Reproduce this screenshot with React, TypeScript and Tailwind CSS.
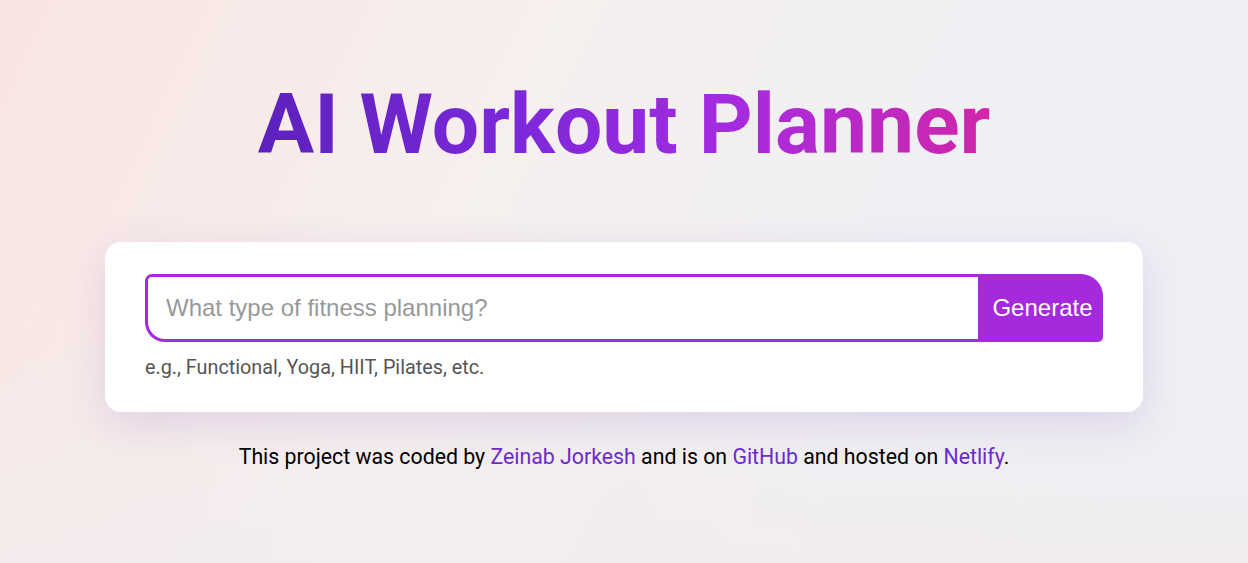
import React from 'react';

const App: React.FC = () => {
  return (
    <div className="min-h-screen w-full bg-[linear-gradient(115deg,#f9e5e2_0%,#f6efee_35%,#eff0f4_70%,#eef0f5_100%)] font-['Roboto',sans-serif]">
      <div className="min-h-screen w-full bg-[linear-gradient(180deg,rgba(255,255,255,0)_60%,rgba(242,236,238,0.7)_100%)]">
        <div className="mx-auto flex w-[1038px] flex-col items-center pt-[75px]">
          <h1 className="bg-[linear-gradient(90deg,#5d21bd_0%,#7b28d9_35%,#a62be0_65%,#d026aa_100%)] bg-clip-text text-[84px] font-bold leading-[100px] text-transparent">
            AI Workout Planner
          </h1>

          <div className="mt-[67px] w-full rounded-2xl bg-white px-10 pt-8 pb-[32px] shadow-[0_12px_40px_rgba(120,70,190,0.16)]">
            <form className="flex h-[68px] w-full" onSubmit={(e) => e.preventDefault()}>
              <input
                type="search"
                placeholder="What type of fitness planning?"
                className="h-full flex-1 rounded-tl-[7px] rounded-bl-[20px] border-[3px] border-r-0 border-[#a52ade] bg-white px-[18px] font-['Liberation_Sans',Arial,sans-serif] text-[24px] text-gray-800 placeholder:text-[#999] focus:outline-none"
              />
              <button
                type="submit"
                className="h-full w-[125px] rounded-tr-[22px] rounded-br-[5px] bg-[#a52ade] pl-1 font-['Liberation_Sans',Arial,sans-serif] text-[24px] text-white"
              >
                Generate
              </button>
            </form>
            <p className="mt-[14px] text-[19.8px] leading-[24px] text-[#555]">e.g., Functional, Yoga, HIIT, Pilates, etc.</p>
          </div>

          <footer className="mt-[31px] text-[21.3px] leading-[28px] text-black">
            This project was coded by{' '}
            <a href="#" className="text-[#6b2bcb]">
              Zeinab Jorkesh
            </a>{' '}
            and is on{' '}
            <a href="#" className="text-[#6b2bcb]">
              GitHub
            </a>{' '}
            and hosted on{' '}
            <a href="#" className="text-[#6b2bcb]">
              Netlify
            </a>
            .
          </footer>
        </div>
      </div>
    </div>
  );
};

export default App;
